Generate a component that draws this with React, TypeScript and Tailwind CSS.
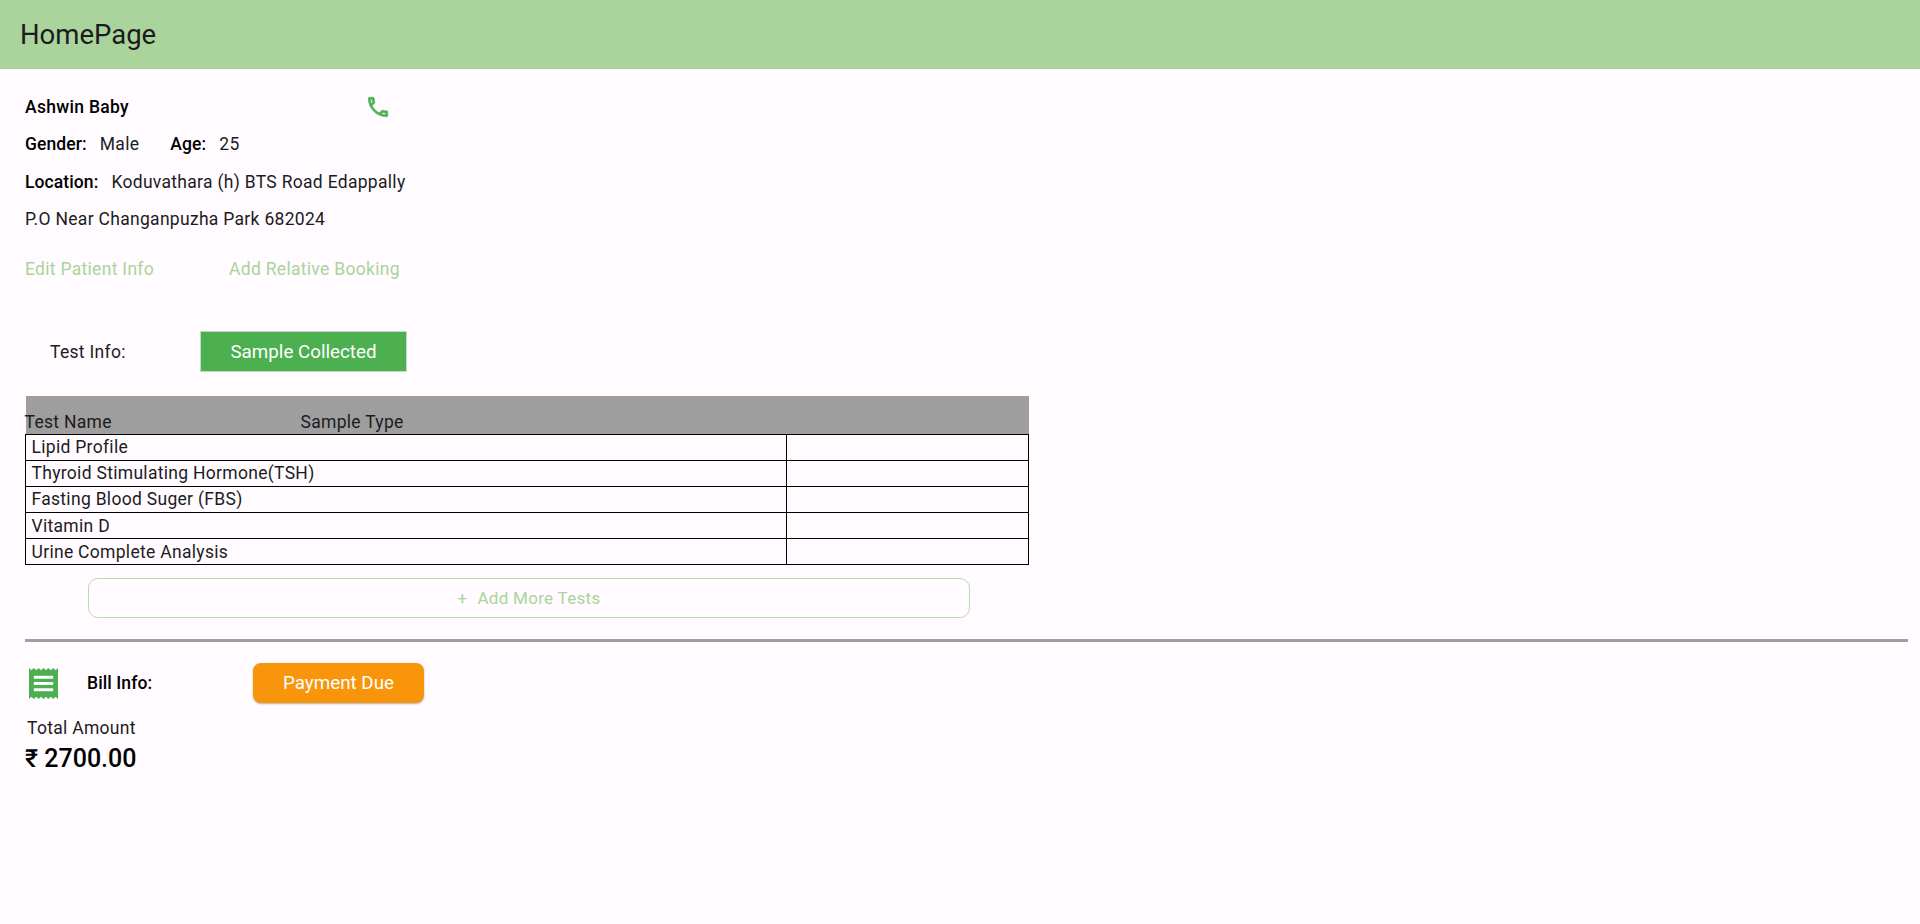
const tests = [
  'Lipid Profile',
  'Thyroid Stimulating Hormone(TSH)',
  'Fasting Blood Suger (FBS)',
  'Vitamin D',
  'Urine Complete Analysis',
];

function PhoneIcon() {
  return (
    <svg viewBox="0 0 24 24" className="w-[26px] h-[26px] mr-[22px] text-[#4caf50]" fill="currentColor" stroke="currentColor" strokeWidth="0.5">
      <path d="M6.54 5c.06.89.21 1.76.45 2.59l-1.2 1.2c-.41-1.2-.67-2.47-.76-3.79h1.51m9.86 12.02c.85.24 1.72.39 2.6.45v1.49c-1.32-.09-2.59-.35-3.8-.75l1.2-1.19M7.5 3H4c-.55 0-1 .45-1 1 0 9.39 7.61 17 17 17 .55 0 1-.45 1-1v-3.49c0-.55-.45-1-1-1-1.24 0-2.45-.2-3.57-.57-.1-.04-.21-.05-.31-.05-.26 0-.51.1-.71.29l-2.2 2.2c-2.83-1.45-5.15-3.76-6.59-6.59l2.2-2.2c.28-.28.36-.67.25-1.02C8.7 6.45 8.5 5.25 8.5 4c0-.55-.45-1-1-1z" />
    </svg>
  );
}

function ReceiptIcon() {
  return (
    <svg viewBox="3 2 18 20" preserveAspectRatio="none" className="w-[29px] h-[31px] text-[#4caf50]" fill="currentColor">
      <path d="M18 17H6v-2h12v2zm0-4H6v-2h12v2zm0-4H6V7h12v2zM3 22l1.5-1.5L6 22l1.5-1.5L9 22l1.5-1.5L12 22l1.5-1.5L15 22l1.5-1.5L18 22l1.5-1.5L21 22V2l-1.5 1.5L18 2l-1.5 1.5L15 2l-1.5 1.5L12 2l-1.5 1.5L9 2 7.5 3.5 6 2 4.5 3.5 3 2v20z" />
    </svg>
  );
}

export default function App() {
  return (
    <div className="min-h-[924px] bg-[#fffbfe] font-['Roboto',sans-serif] text-[17.5px] leading-[24px] tracking-[0.3px] text-[#1c1b1f]">
      <header className="h-[69px] bg-[#aad49c] flex items-center pl-[20px]">
        <h1 className="text-[27.5px] leading-[36px] tracking-normal font-normal">HomePage</h1>
      </header>

      <main className="pl-[25px] pr-[12px] pt-[26px]">
        <div className="w-[388px]">
          <div className="h-[24px] flex items-center justify-between">
            <span className="font-medium text-black">Ashwin Baby</span>
            <PhoneIcon />
          </div>
          <div className="mt-[13px] flex">
            <span className="font-medium tracking-[0.1px] text-black">Gender:</span>
            <span className="ml-[13px]">Male</span>
            <span className="ml-[31px] font-medium tracking-[0.1px] text-black">Age:</span>
            <span className="ml-[13px]">25</span>
          </div>
          <div className="mt-[14px] flex whitespace-nowrap">
            <span className="font-medium tracking-[0.1px] text-black">Location:</span>
            <span className="ml-[13px]">Koduvathara (h) BTS Road Edappally</span>
          </div>
          <div className="mt-[13px] whitespace-nowrap">P.O Near Changanpuzha Park 682024</div>
          <div className="mt-[26px] flex text-[#aad49c] whitespace-nowrap">
            <span>Edit Patient Info</span>
            <span className="ml-[75px]">Add Relative Booking</span>
          </div>
        </div>

        <div className="mt-[50px] flex items-center">
          <span className="ml-[25px] w-[150px]">Test Info:</span>
          <div className="w-[207px] h-[41px] flex items-center justify-center bg-[#4caf50] border border-[#c4dfc0] text-white text-[18.8px] tracking-normal">
            Sample Collected
          </div>
        </div>

        <table className="mt-[24px] w-[1004px] border-collapse table-fixed">
          <colgroup>
            <col className="w-[761px]" />
            <col />
          </colgroup>
          <thead>
            <tr className="bg-[#9e9e9e]">
              <th colSpan={2} className="h-[38px] p-0 font-normal text-left align-bottom">
                <div className="flex">
                  <span className="w-[275px] -ml-[1px] mr-[1px]">Test Name</span>
                  <span>Sample Type</span>
                </div>
              </th>
            </tr>
          </thead>
          <tbody>
            {tests.map((t) => (
              <tr key={t} className="h-[26.2px]">
                <td className="border border-black py-0 px-[5.5px] leading-[22px]">{t}</td>
                <td className="border border-black p-0"></td>
              </tr>
            ))}
          </tbody>
        </table>

        <div className="mt-[13px] ml-[63px] w-[882px] h-[40px] flex items-center justify-center rounded-[10px] border border-[#b6dcaa] text-[#aad49c] text-[17px]">
          <span>+</span>
          <span className="ml-[10px]">Add More Tests</span>
        </div>

        <div className="mt-[21px] h-[3px] bg-[#9e9e9e]"></div>

        <div className="mt-[21px] flex items-center">
          <div className="ml-[4px]">
            <ReceiptIcon />
          </div>
          <span className="ml-[29px] w-[166px] font-medium tracking-[0.1px] text-black">Bill Info:</span>
          <div className="w-[171px] h-[40px] flex items-center justify-center rounded-[8px] bg-[#f9950a] text-white text-[18.8px] tracking-normal shadow-[0_1px_2px_rgba(0,0,0,0.3)]">
            Payment Due
          </div>
        </div>

        <div className="mt-[13px] ml-[2px]">Total Amount</div>
        <div className="mt-[3px] text-[25px] leading-[32px] tracking-normal font-medium text-black">₹ 2700.00</div>
      </main>
    </div>
  );
}
